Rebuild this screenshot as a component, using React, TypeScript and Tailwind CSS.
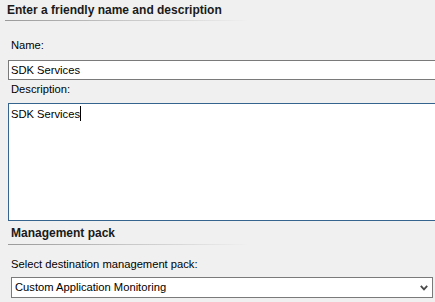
function Header({ children, indent }: { children: string; indent: "first" | "second" }) {
  return (
    <div
      className={
        indent === "first"
          ? "h-[20px] pl-[7px] pt-[2px] text-[12px] font-bold leading-[16px] text-[#1a1a1a]"
          : "h-[16px] pl-[11px] text-[12px] font-bold leading-[16px] text-[#1a1a1a]"
      }
    >
      {children}
    </div>
  );
}

export default function App() {
  return (
    <div className="w-[435px] h-[302px] overflow-hidden bg-[#f0f0f0] text-[11.2px] text-black font-['Liberation_Sans',Arial,sans-serif]">
      <Header indent="first">Enter a friendly name and description</Header>
      <div className="ml-[5px] h-px w-[245px] bg-gradient-to-r from-[#9a9a9a] via-[#c8c8c8] to-[#f0f0f0]" />

      <div className="mt-[17px] pl-[11px] h-[15px] leading-[15px]">Name:</div>
      <div className="mt-[7px] ml-[8px] w-[440px] h-[20px] border border-[#7a7a7a] bg-white pl-[2px] leading-[18px]">
        SDK Services
      </div>

      <div className="mt-[2px] pl-[11px] h-[15px] leading-[15px]">Description:</div>
      <div className="mt-[6px] ml-[8px] w-[440px] h-[118px] border border-[#35648f] bg-white pl-[2px] pt-[2px] leading-[15px]">
        SDK Services<span className="inline-block w-px h-[15px] bg-black align-[-3px]" />
      </div>

      <div className="mt-[4px]">
        <Header indent="second">Management pack</Header>
      </div>
      <div className="mt-[3px] ml-[8px] h-px w-[242px] bg-gradient-to-r from-[#9a9a9a] via-[#c8c8c8] to-[#f0f0f0]" />

      <div className="mt-[12px] pl-[11px] h-[15px] leading-[15px]">Select destination management pack:</div>
      <div className="mt-[5px] ml-[11px] w-[422px] h-[21px] border border-[#7a7a7a] bg-white flex items-center justify-between pl-[3px] pr-[4px]">
        <span>Custom Application Monitoring</span>
        <svg width="8" height="6" viewBox="0 0 8 6" className="mt-[1px]">
          <path d="M0.8 0.8 L4 4.4 L7.2 0.8" fill="none" stroke="#4a4a4a" strokeWidth="1.8" />
        </svg>
      </div>
    </div>
  );
}
